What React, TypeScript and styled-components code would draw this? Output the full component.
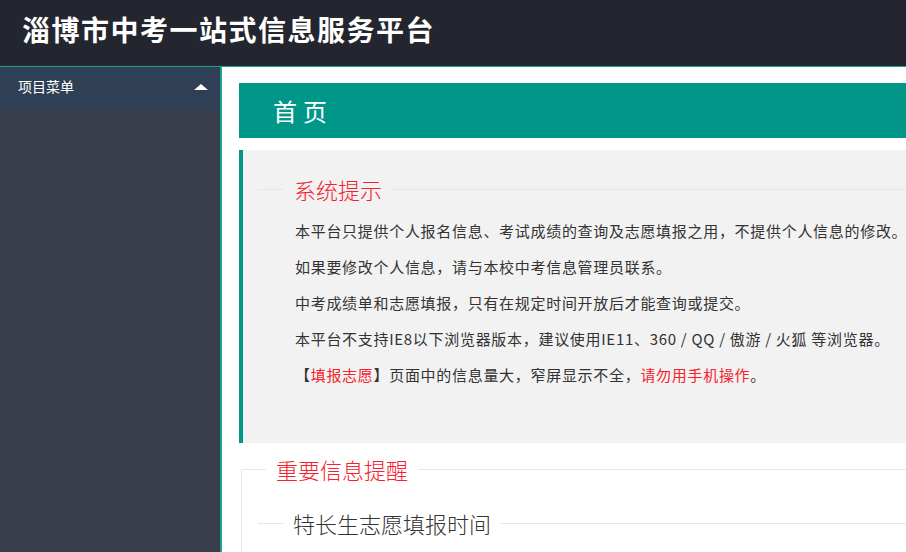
import styled, { createGlobalStyle } from "styled-components";

const GlobalStyle = createGlobalStyle`
  html, body {
    margin: 0;
    padding: 0;
    overflow: hidden;
  }
  body {
    font-family: "Microsoft YaHei", "Noto Sans CJK SC", "Liberation Sans", sans-serif;
    color: #333;
    background: #fff;
  }
`;

const Page = styled.div`
  width: 906px;
  height: 552px;
  display: flex;
  flex-direction: column;
  overflow: hidden;
`;

const Header = styled.header`
  height: 66px;
  flex: none;
  background: #23262e;
  border-bottom: 1px solid #1aa094;
  display: flex;
  align-items: center;
  padding-left: 22px;
`;

const Logo = styled.h1`
  margin: 0;
  font-size: 28px;
  font-weight: bold;
  color: #fff;
  letter-spacing: 1.5px;
  line-height: 1;
  margin-top: -8px;
`;

const Body = styled.div`
  flex: 1;
  display: flex;
  min-height: 0;
`;

const Side = styled.aside`
  width: 220px;
  flex: none;
  background: #393d49;
  border-right: 2px solid #1aa094;
`;

const MenuHead = styled.div`
  height: 43px;
  display: flex;
  align-items: center;
  justify-content: space-between;
  padding: 0 12px 6px 18px;
  box-sizing: border-box;
  background: #2f4056;
  color: #fff;
  font-size: 14px;
`;

const Caret = styled.span`
  width: 0;
  height: 0;
  border-left: 7px solid transparent;
  border-right: 7px solid transparent;
  border-bottom: 6px solid #fff;
  margin-top: 2px;
`;

const Main = styled.main`
  flex: 1;
  min-width: 0;
  padding: 16px 0 0 17px;
  overflow: hidden;
`;

const Banner = styled.div`
  width: 700px;
  height: 55px;
  background: #009688;
  color: #fff;
  font-size: 24px;
  letter-spacing: 6px;
  display: flex;
  align-items: center;
  padding-left: 34px;
  box-sizing: border-box;
`;

const Quote = styled.blockquote`
  margin: 12px 0 0;
  width: 700px;
  height: 293px;
  box-sizing: border-box;
  background: #f2f2f2;
  border-left: 4px solid #009688;
  padding: 28px 0 0 15px;
`;

const TitleField = styled.fieldset`
  margin: 0;
  padding: 0;
  border: none;
  border-top: 1px solid #e6e6e6;
  min-width: 0;
`;

const Legend = styled.legend<{ $red?: boolean; $indent: number }>`
  margin-left: ${(p) => p.$indent}px;
  padding: 0 10px;
  font-size: 22px;
  font-weight: 300;
  color: ${(p) => (p.$red ? "#f5222d" : "#333")};
  line-height: 1;
`;

const Notes = styled.div`
  padding: 13px 0 0 37px;
`;

const Line = styled.p`
  margin: 0;
  height: 36px;
  line-height: 36px;
  font-size: 15px;
  letter-spacing: 0.7px;
  color: #333;
  white-space: nowrap;
`;

const Red = styled.span`
  color: #f5222d;
`;

const BoxField = styled.fieldset`
  margin: 15px 0 0 2px;
  padding: 32px 0 0 16px;
  width: 700px;
  border: 1px solid #e6e6e6;
  border-right: none;
  min-width: 0;
  height: 120px;
  box-sizing: border-box;
`;

function App(): React.ReactElement {
  return <>
    <GlobalStyle />
    <Page>
      <Header>
        <Logo>淄博市中考一站式信息服务平台</Logo>
      </Header>

      <Body>
        <Side>
          <MenuHead>
            项目菜单
            <Caret />
          </MenuHead>
        </Side>

        <Main>
          <Banner>首页</Banner>

          <Quote>
            <TitleField>
              <Legend
                $indent={26}
                $red>
                系统提示
              </Legend>
              <Notes>
                <Line>本平台只提供个人报名信息、考试成绩的查询及志愿填报之用，不提供个人信息的修改。</Line>
                <Line>如果要修改个人信息，请与本校中考信息管理员联系。</Line>
                <Line>中考成绩单和志愿填报，只有在规定时间开放后才能查询或提交。</Line>
                <Line>本平台不支持IE8以下浏览器版本，建议使用IE11、360 / QQ / 傲游 / 火狐 等浏览器。</Line>
                <Line>
                  【<Red>填报志愿</Red>】页面中的信息量大，窄屏显示不全，<Red>请勿用手机操作</Red>。
                </Line>
              </Notes>
            </TitleField>
          </Quote>

          <BoxField>
            <Legend
              $indent={8}
              $red>
              重要信息提醒
            </Legend>
            <TitleField>
              <Legend $indent={25}>特长生志愿填报时间</Legend>
            </TitleField>
          </BoxField>
        </Main>
      </Body>
    </Page>
  </>;
}

export default App;
